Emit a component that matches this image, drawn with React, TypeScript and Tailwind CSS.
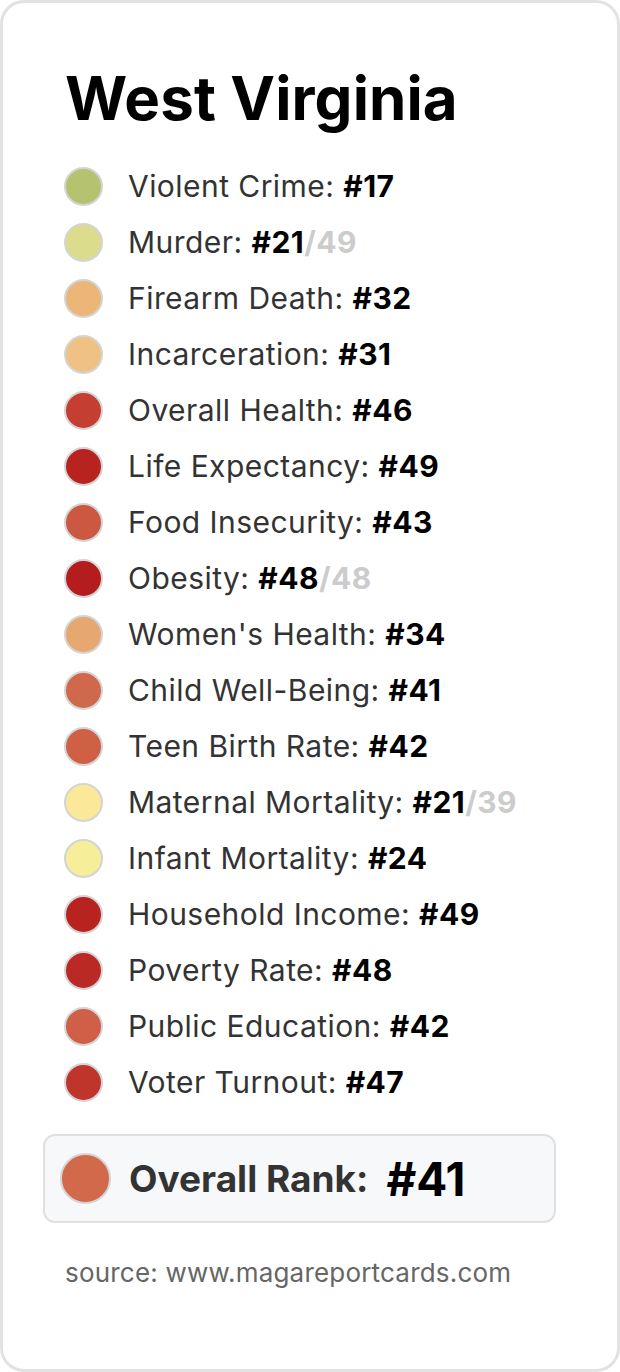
const rows: { label: string; rank: number; of?: number; color: string }[] = [
  { label: 'Violent Crime', rank: 17, color: '#b5c370' },
  { label: 'Murder', rank: 21, of: 49, color: '#dbdd8d' },
  { label: 'Firearm Death', rank: 32, color: '#ecb677' },
  { label: 'Incarceration', rank: 31, color: '#efc283' },
  { label: 'Overall Health', rank: 46, color: '#c43e32' },
  { label: 'Life Expectancy', rank: 49, color: '#b82320' },
  { label: 'Food Insecurity', rank: 43, color: '#cc5842' },
  { label: 'Obesity', rank: 48, of: 48, color: '#b41c1e' },
  { label: "Women's Health", rank: 34, color: '#e6a870' },
  { label: 'Child Well-Being', rank: 41, color: '#d0694b' },
  { label: 'Teen Birth Rate', rank: 42, color: '#cf6046' },
  { label: 'Maternal Mortality', rank: 21, of: 39, color: '#fbe898' },
  { label: 'Infant Mortality', rank: 24, color: '#f6ee99' },
  { label: 'Household Income', rank: 49, color: '#b82320' },
  { label: 'Poverty Rate', rank: 48, color: '#bb2924' },
  { label: 'Public Education', rank: 42, color: '#cf5f46' },
  { label: 'Voter Turnout', rank: 47, color: '#c0352b' },
]

function Dot({ color, size = 'sm' }: { color: string; size?: 'sm' | 'lg' }) {
  return (
    <span
      className={
        size === 'lg'
          ? 'block w-[51px] h-[51px] shrink-0 rounded-full border-2 border-[#d4d4d4]'
          : 'block w-[39px] h-[39px] shrink-0 rounded-full border-2 border-[#d4d4d4]'
      }
      style={{ backgroundColor: color }}
    />
  )
}

export default function App() {
  return (
    <div className="bg-white font-['Inter','Liberation_Sans',sans-serif]">
      <div className="w-[620px] h-[1372px] border-[3px] border-[#e2e2e2] rounded-[24px] px-[40px] pt-[65px]">
        <h1 className="pl-[22px] text-[60px] leading-none font-bold text-black tracking-[0.1px]">
          West Virginia
        </h1>

        {/* stat rows */}
        <ul className="mt-[30px] pl-[21px]">
          {rows.map((r) => (
            <li key={r.label} className="h-[56px] flex items-center gap-[25px]">
              <Dot color={r.color} />
              <span className="text-[30px] leading-[56px] text-[#333] tracking-[0.45px]">
                {r.label}: <b className="font-bold text-black">#{r.rank}</b>
                {r.of && <b className="font-bold text-[#cccccc]">/{r.of}</b>}
              </span>
            </li>
          ))}
        </ul>

        <div className="mt-[24px] w-[513px] h-[89px] flex items-center gap-[18px] pl-[15px] bg-[#f7f8fa] border-2 border-[#e0e0e0] rounded-[12px]">
          <Dot color="#d2694a" size="lg" />
          <span className="text-[37px] leading-none font-bold text-[#333]">Overall Rank:</span>
          <span className="text-[46px] leading-none font-bold text-black">#41</span>
        </div>

        <p className="mt-[32px] pl-[22px] text-[26px] leading-[36px] text-[#666] tracking-[0.2px]">
          source: www.magareportcards.com
        </p>
      </div>
    </div>
  )
}
